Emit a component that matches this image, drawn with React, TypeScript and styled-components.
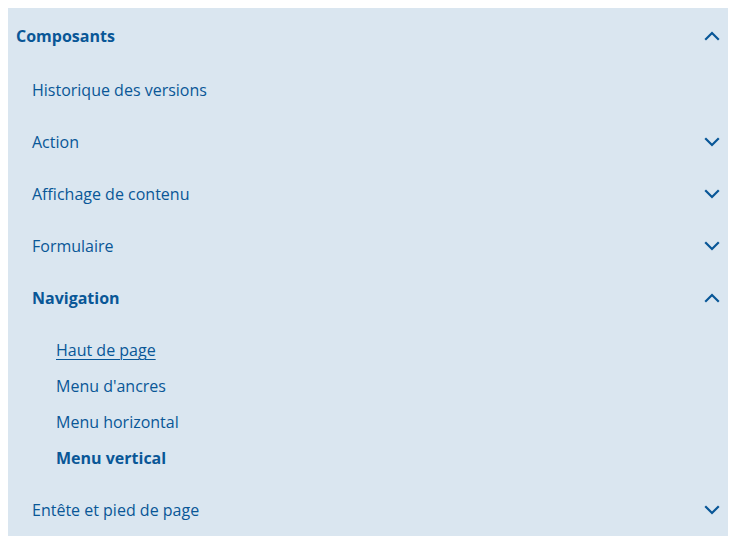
import React from "react";
import styled, { createGlobalStyle } from "styled-components";

const Global = createGlobalStyle`
  html, body { margin: 0; padding: 0; background: #ffffff; }
  body { padding: 8px; font-family: "Open Sans", "Noto Sans", sans-serif; }
  * { box-sizing: border-box; }
`;

const Panel = styled.nav`
  width: 720px;
  background: #dae6f0;
  color: #095797;
  font-size: 16px;
`;

const List = styled.ul`
  list-style: none;
  margin: 0;
  padding: 0;
`;

const SubList = styled.ul`
  list-style: none;
  margin: 0;
  padding: 8px 0;
`;

const Row = styled.div<{ $h: number; $indent: number; $bold?: boolean }>`
  display: flex;
  align-items: center;
  justify-content: space-between;
  height: ${(p) => p.$h}px;
  padding-left: ${(p) => p.$indent}px;
  padding-right: 8px;
  font-weight: ${(p) => (p.$bold ? 700 : 400)};
  line-height: 24px;
`;

const Label = styled.span<{ $underline?: boolean }>`
  text-decoration: ${(p) => (p.$underline ? "underline" : "none")};
  text-underline-offset: 3px;
  text-decoration-thickness: 1px;
`;

const Chevron = ({ up }: { up?: boolean }) => (
  <svg width="16" height="16" viewBox="0 0 16 16" fill="none">
    <path
      d={up ? "M2 11 L8 5 L14 11" : "M2 5 L8 11 L14 5"}
      stroke="#095797"
      strokeWidth="2.2"
      strokeLinecap="square"
      strokeLinejoin="miter"
    />
  </svg>
);

const Item = ({
  label,
  h = 52,
  indent = 24,
  bold,
  chevron,
  underline,
}: {
  label: string;
  h?: number;
  indent?: number;
  bold?: boolean;
  chevron?: "up" | "down";
  underline?: boolean;
}) => (
  <Row $h={h} $indent={indent} $bold={bold}>
    <Label $underline={underline}>{label}</Label>
    {chevron && <Chevron up={chevron === "up"} />}
  </Row>
);

export default function App() {
  return (
    <>
      <Global />
      <Panel>
        <Item label="Composants" h={56} indent={8} bold chevron="up" />
        <List>
          <li><Item label="Historique des versions" /></li>
          <li><Item label="Action" chevron="down" /></li>
          <li><Item label="Affichage de contenu" chevron="down" /></li>
          <li><Item label="Formulaire" chevron="down" /></li>
          <li>
            <Item label="Navigation" bold chevron="up" />
            <SubList>
              <li><Item label="Haut de page" h={36} indent={48} underline /></li>
              <li><Item label="Menu d'ancres" h={36} indent={48} /></li>
              <li><Item label="Menu horizontal" h={36} indent={48} /></li>
              <li><Item label="Menu vertical" h={36} indent={48} bold /></li>
            </SubList>
          </li>
          <li><Item label="Entête et pied de page" chevron="down" /></li>
        </List>
      </Panel>
    </>
  );
}
